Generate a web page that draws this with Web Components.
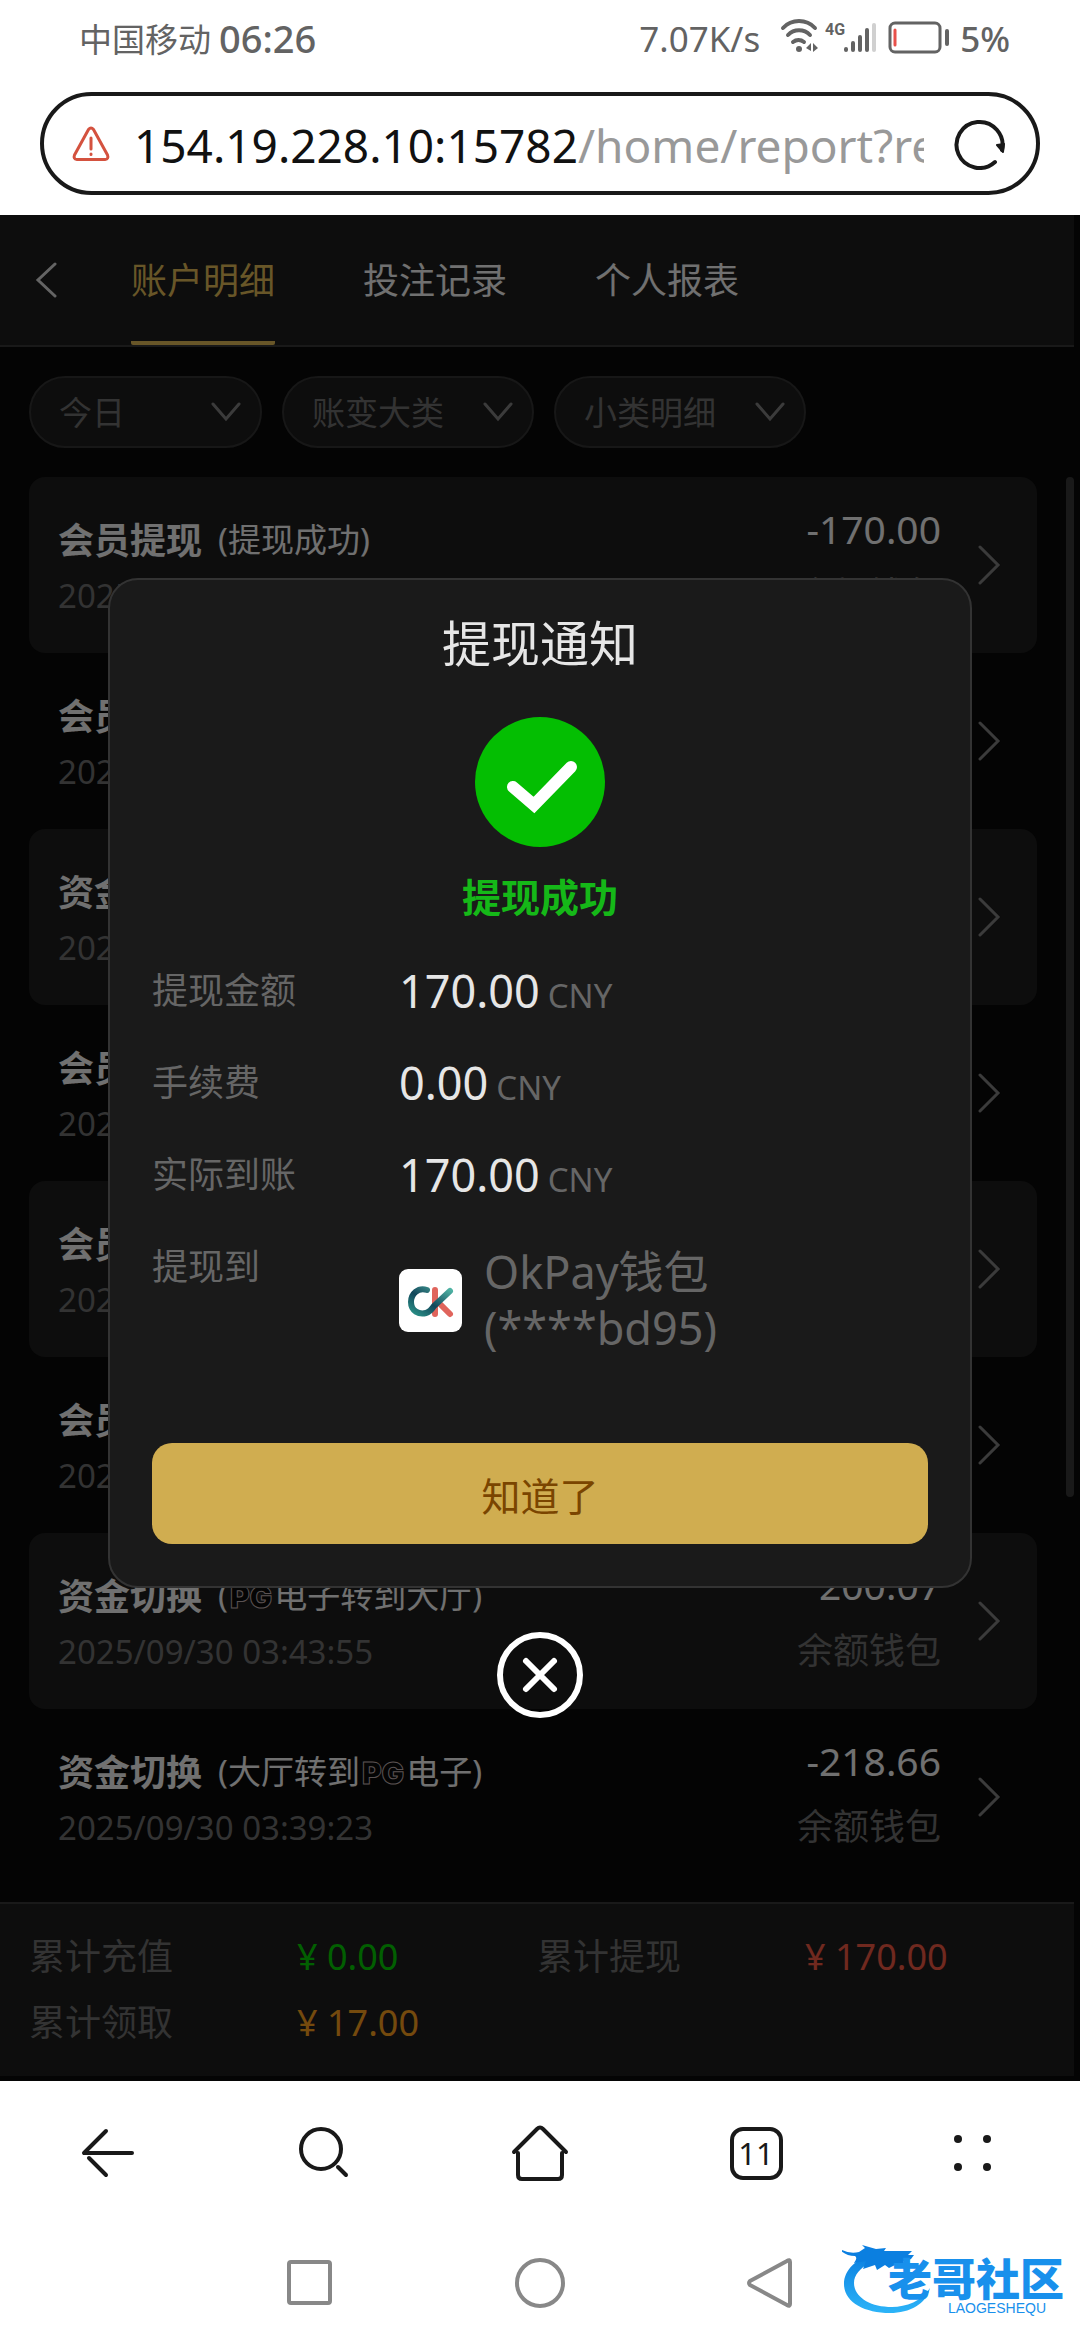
<!DOCTYPE html>
<html lang="zh-CN">
<head>
<meta charset="utf-8">
<meta name="viewport" content="width=device-width, initial-scale=1">
<title>账户明细</title>
<style>
    body {
        margin: 0;
        background: #fff;
        font-family: "Noto Sans", "Noto Sans CJK SC", sans-serif;
    }
</style>
</head>
<body>
<phone-screen>
    <status-bar slot="top"></status-bar>
    <address-bar slot="top" host="154.19.228.10:15782" path="/home/report?record=1"></address-bar>

    <report-header></report-header>
    <filter-bar></filter-bar>
    <record-list>
        <record-row name="会员提现" date="2025/09/30" amount="-170.00" wallet="余额钱包">(提现成功)</record-row>
        <record-row name="会员提现" date="2025/09/30"></record-row>
        <record-row name="资金切换" date="2025/09/30"></record-row>
        <record-row name="会员提现" date="2025/09/30"></record-row>
        <record-row name="会员提现" date="2025/09/30"></record-row>
        <record-row name="会员提现" date="2025/09/30"></record-row>
        <record-row name="资金切换" date="2025/09/30 03:43:55" amount="200.07" wallet="余额钱包">(<pg-mark></pg-mark>电子转到大厅)</record-row>
        <record-row name="资金切换" date="2025/09/30 03:39:23" amount="-218.66" wallet="余额钱包">(大厅转到<pg-mark></pg-mark>电子)</record-row>
    </record-list>
    <total-bar></total-bar>

    <notice-dialog slot="overlay" name="提现通知" status="提现成功">
        <notice-row label="提现金额" unit="CNY">170.00</notice-row>
        <notice-row label="手续费" unit="CNY">0.00</notice-row>
        <notice-row label="实际到账" unit="CNY">170.00</notice-row>
        <notice-row label="提现到"><pay-wallet name="OkPay钱包" account="(****bd95)"></pay-wallet></notice-row>
    </notice-dialog>

    <browser-nav slot="bottom" tabs="11"></browser-nav>
    <system-nav slot="bottom"></system-nav>
    <site-mark slot="bottom"></site-mark>
</phone-screen>

<script>
function define(name, html, setup) {
    const template = document.createElement('template');
    template.innerHTML = html;

    customElements.define(name, class extends HTMLElement {
        constructor() {
            super();
            this.attachShadow({ mode: 'open' });
            this.shadowRoot.appendChild(template.content.cloneNode(true));
            if (setup) setup(this, this.shadowRoot);
        }
    });
}

// copies attributes of the host into the shadow nodes marked with data-text
function fill(host, root) {
    root.querySelectorAll('[data-text]').forEach(node => {
        node.textContent = host.getAttribute(node.dataset.text) || '';
    });
}

define('phone-screen', `
<style>
    :host { display: flex; flex-direction: column; min-height: 100vh; position: relative; }
    main {
        flex: 1;
        display: flex;
        flex-direction: column;
        position: relative;
        background: #080808;
    }
    .overlay {
        position: absolute;
        inset: 0;
        display: flex;
        flex-direction: column;
        justify-content: center;
        align-items: center;
        background: rgba(0, 0, 0, .5);
    }
</style>
<slot name="top"></slot>
<main>
    <slot></slot>
    <div class="overlay"><slot name="overlay"></slot></div>
</main>
<slot name="bottom"></slot>
`);

define('status-bar', `
<style>
    :host {
        display: flex;
        align-items: center;
        height: 76px;
        padding: 0 70px 0 79px;
        color: #636363;
    }
    .carrier { font-size: 33px; }
    .time { margin-left: 8px; font-weight: 500; font-size: 38px; }
    .speed { margin-left: auto; margin-right: 20px; font-size: 35px; }
    .percent { font-weight: 500; font-size: 35px; }
</style>
<span class="carrier">中国移动</span>
<span class="time">06:26</span>
<span class="speed">7.07K/s</span>
<svg width="180" height="40" viewBox="0 0 180 40" fill="none" stroke="#636363" stroke-width="4" stroke-linecap="round">
    <path d="M3 10a22 22 0 0 1 32 0M8 17a15 15 0 0 1 22 0M13 24a9 9 0 0 1 11 0"/>
    <circle cx="19" cy="31" r="3" fill="#636363" stroke="none"/>
    <path d="M26 30l5-5v8zM38 30l-5-5v9z" fill="#636363" stroke="none"/>
    <text x="45" y="17" font-size="16" font-weight="700" fill="#636363" stroke="none" font-family="Roboto, sans-serif">4G</text>
    <path d="M66 31v1M73 25v7M80 19v13M87 12v20"/>
    <path d="M94 7v25" stroke="#d0d0d0"/>
    <rect x="110" y="5" width="50" height="29" rx="5" stroke-width="3"/>
    <path d="M115 12v15" stroke="#e8504a" stroke-width="3"/>
    <path d="M167 13v13" stroke-width="4"/>
</svg>
<span class="percent">5%</span>
`);

define('address-bar', `
<style>
    :host { display: block; padding: 16px 40px 20px; }
    form {
        display: flex;
        align-items: center;
        box-sizing: border-box;
        height: 103px;
        padding: 0 30px 0 28px;
        border: 4px solid #191919;
        border-radius: 52px;
    }
    button { padding: 0; border: 0; background: none; font: inherit; }
    .url {
        flex: 1;
        min-width: 0;
        margin: 2px 30px 0 24px;
        overflow: hidden;
        font-size: 46px;
        line-height: 64px;
        text-align: left;
        white-space: nowrap;
        color: #999;
    }
    .host { color: #111; }
    svg { display: block; }
</style>
<form>
    <svg width="38" height="36" viewBox="0 0 38 36" fill="none" stroke="#d4523f" stroke-width="3" stroke-linecap="round" stroke-linejoin="round">
        <path d="M16.500 3.500L2.500 29q-1.500 4 2.500 4.500h28q4-.5 2.500-4.500L21.500 3.500q-2.500-3-5 0zM19 12v11M19 28v.5"/>
    </svg>
    <button type="button" class="url"><span class="host" data-text="host"></span><span data-text="path"></span></button>
    <button type="button" aria-label="刷新">
        <svg width="52" height="52" viewBox="0 0 52 52" fill="none" stroke="#191919" stroke-width="4" stroke-linecap="round">
            <path d="M41 44A23 23 0 1 1 48 32"/>
            <path d="M43 27l6 7 1-8z" fill="#191919" stroke-width="2" stroke-linejoin="round"/>
        </svg>
    </button>
</form>
`, fill);

define('report-header', `
<style>
    :host {
        display: flex;
        align-items: center;
        gap: 74px;
        height: 130px;
        margin-right: 6px;
        padding-left: 35px;
        background: #1a1a1a;
        border-bottom: 2px solid #333;
    }
    button { display: block; padding: 0; border: 0; background: none; }
    svg { display: block; }
    nav { display: flex; align-self: stretch; gap: 88px; }
    a {
        box-sizing: border-box;
        height: 130px;
        border-bottom: 4px solid transparent;
        border-radius: 2px;
        color: #e0e0e0;
        font-size: 36px;
        line-height: 132px;
        text-decoration: none;
    }
    .active { color: #d0ad50; border-color: #d0ad50; }
</style>
<button aria-label="返回">
    <svg width="22" height="36" viewBox="0 0 22 36" fill="none" stroke="#c8c8c8" stroke-width="3" stroke-linecap="round"><path d="M20 2L3 18l17 16"/></svg>
</button>
<nav>
    <a class="active" href="#detail">账户明细</a>
    <a href="#bets">投注记录</a>
    <a href="#personal">个人报表</a>
</nav>
`);

define('filter-bar', `
<style>
    :host { display: flex; gap: 20px; padding: 29px 29px 0; }
    label { display: grid; align-items: center; width: 252px; }
    label:first-of-type { width: 233px; }
    select, svg { grid-area: 1 / 1; }
    select {
        appearance: none;
        box-sizing: border-box;
        width: 100%;
        height: 72px;
        padding: 0 28px;
        border: 2px solid #2e2e2e;
        border-radius: 36px;
        background: #1a1a1a;
        color: #666;
        font: inherit;
        font-size: 33px;
    }
    svg { justify-self: end; margin-right: 20px; pointer-events: none; }
</style>
<label><select aria-label="日期"><option>今日</option></select><svg width="32" height="20" viewBox="0 0 32 20" fill="none" stroke="#777" stroke-width="3" stroke-linecap="round"><path d="M3 2l13 15L29 2"/></svg></label>
<label><select aria-label="大类"><option>账变大类</option></select><svg width="32" height="20" viewBox="0 0 32 20" fill="none" stroke="#777" stroke-width="3" stroke-linecap="round"><path d="M3 2l13 15L29 2"/></svg></label>
<label><select aria-label="小类"><option>小类明细</option></select><svg width="32" height="20" viewBox="0 0 32 20" fill="none" stroke="#777" stroke-width="3" stroke-linecap="round"><path d="M3 2l13 15L29 2"/></svg></label>
`);

define('record-list', `
<style>
    :host { display: flex; flex: 1; justify-content: space-between; padding: 29px 6px 0 29px; }
    .rows { flex: 1; }
    .thumb { width: 8px; height: 1020px; margin-left: 29px; border-radius: 4px; background: #333; }
    ::slotted(record-row:nth-child(odd)) { background: #1a1a1a; }
</style>
<div class="rows"><slot></slot></div>
<div class="thumb"></div>
`);

define('record-row', `
<style>
    :host {
        display: flex;
        align-items: center;
        box-sizing: border-box;
        height: 176px;
        padding: 0 36px 0 29px;
        border-radius: 16px;
        color: #e0e0e0;
    }
    .info { flex: 1; padding-top: 4px; }
    .title { display: flex; align-items: center; gap: 16px; height: 56px; margin-bottom: 2px; font-size: 33px; }
    b { font-size: 36px; }
    .side { margin-right: 36px; padding-bottom: 6px; text-align: right; }
    .date, .wallet, .amount { line-height: 56px; }
    .date, .wallet { color: #666; }
    .date { font-size: 33px; }
    .wallet { margin-top: 10px; font-size: 36px; }
    .amount { font-size: 39px; }
</style>
<div class="info">
    <div class="title"><b data-text="name"></b><span><slot></slot></span></div>
    <div class="date" data-text="date"></div>
</div>
<div class="side">
    <div class="amount" data-text="amount"></div>
    <div class="wallet" data-text="wallet"></div>
</div>
<svg width="24" height="40" viewBox="0 0 24 40" fill="none" stroke="#777" stroke-width="3" stroke-linecap="round"><path d="M3 2l18 18L3 38"/></svg>
`, fill);

define('pg-mark', `
<style>
    :host {
        display: inline-flex;
        margin: 0 2px;
        color: #080808;
        font: 900 30px/36px Inter, sans-serif;
        -webkit-text-stroke: 1px #b4a4a4;
    }
</style>
<span>PG</span>
`);

define('total-bar', `
<style>
    :host {
        display: block;
        margin: 0 6px 5px 0;
        padding: 20px 29px;
        background: #1a1a1a;
        border-top: 2px solid #333;
    }
    dl { display: grid; grid-template-columns: 1fr 1fr; margin: 0; font-size: 36px; line-height: 66px; }
    div { display: flex; }
    dt { width: 268px; color: #666; }
    dd { margin: 0; }
    .in { color: #04be02; }
    .out { color: #e0533f; }
    .bonus { color: #e8941a; }
</style>
<dl>
    <div><dt>累计充值</dt><dd class="in">¥ 0.00</dd></div>
    <div><dt>累计提现</dt><dd class="out">¥ 170.00</dd></div>
    <div><dt>累计领取</dt><dd class="bonus">¥ 17.00</dd></div>
</dl>
`);

define('notice-dialog', `
<style>
    :host { display: flex; flex-direction: column; align-items: center; gap: 44px; width: 80%; }
    section {
        box-sizing: border-box;
        width: 100%;
        padding: 30px 42px 42px;
        border: 2px solid #333;
        border-radius: 30px;
        background: #1a1a1a;
        text-align: center;
    }
    h2 { margin: 0 0 41px; color: #e6e6e6; font-size: 49px; font-weight: 400; line-height: 66px; }
    svg { display: block; margin: 0 auto; }
    p { margin: 25px 0 23px; color: #15b818; font-size: 39px; font-weight: 700; line-height: 50px; }
    button { display: block; padding: 0; border: 0; font: inherit; }
    .ok {
        width: 100%;
        height: 101px;
        margin-top: 87px;
        border-radius: 20px;
        background: #d0ad50;
        color: #7a4500;
        font-size: 39px;
    }
    .close { background: none; }
</style>
<section role="dialog">
    <h2 data-text="name"></h2>
    <svg width="130" height="130" viewBox="0 0 130 130">
        <circle cx="65" cy="65" r="65" fill="#04be02"/>
        <path d="M38 70l21 18 37-38" fill="none" stroke="#fff" stroke-width="12" stroke-linecap="round"/>
    </svg>
    <p data-text="status"></p>
    <slot></slot>
    <button class="ok">知道了</button>
</section>
<button class="close" aria-label="关闭">
    <svg width="86" height="86" viewBox="0 0 86 86" fill="none" stroke="#fff" stroke-width="6" stroke-linecap="round">
        <circle cx="43" cy="43" r="40"/>
        <path d="M29 29l28 28M57 29L29 57"/>
    </svg>
</button>
`, fill);

define('notice-row', `
<style>
    :host { display: flex; align-items: flex-start; min-height: 92px; text-align: left; }
    .label { width: 247px; color: #666; font-size: 36px; line-height: 92px; }
    .value { color: #e6e6e6; font-size: 45px; line-height: 92px; }
    .unit { margin-left: 8px; color: #666; font-size: 33px; line-height: 1; }
    .unit:empty { display: none; }
</style>
<span class="label" data-text="label"></span>
<div class="value"><slot></slot><span class="unit" data-text="unit"></span></div>
`, fill);

define('pay-wallet', `
<style>
    :host { display: flex; align-items: center; gap: 22px; padding-top: 23px; color: #666; line-height: 56px; }
    span { display: block; }
</style>
<svg width="63" height="63" viewBox="0 0 63 63" fill="none" stroke-width="6" stroke-linecap="round">
    <defs>
        <linearGradient id="teal" x1="0" y1="1" x2="1" y2="0">
            <stop offset="0" stop-color="#2a9187"/>
            <stop offset=".45" stop-color="#12465a"/>
            <stop offset="1" stop-color="#4fb3a4"/>
        </linearGradient>
    </defs>
    <rect width="63" height="63" rx="9" fill="#fff"/>
    <path d="M36 21v24M38 32l13 13" stroke="#e0645c"/>
    <path d="M28 21c-9-3-16 4-16 12 0 9 8 13 15 11 4-1 6-4 8-7l16-15" stroke="url(#teal)"/>
</svg>
<div><span data-text="name"></span><span data-text="account"></span></div>
`, fill);

define('browser-nav', `
<style>
    :host { display: grid; grid-template-columns: repeat(5, 1fr); height: 144px; }
    button { display: grid; place-items: center; padding: 0; border: 0; background: none; color: #191919; font: inherit; }
    svg { display: block; fill: none; stroke: #191919; stroke-width: 4; stroke-linecap: round; stroke-linejoin: round; }
    .count {
        display: block;
        box-sizing: border-box;
        width: 53px;
        height: 53px;
        border: 4px solid #191919;
        border-radius: 13px;
        font-size: 31px;
        line-height: 44px;
    }
</style>
<button aria-label="后退"><svg width="54" height="54" viewBox="0 0 54 54"><path d="M25 5L3 27h48M8 32l17 17"/></svg></button>
<button aria-label="搜索"><svg width="54" height="54" viewBox="0 0 54 54"><circle cx="24" cy="23" r="20"/><path d="M41 41l8 8"/></svg></button>
<button aria-label="主页"><svg width="58" height="56" viewBox="0 0 58 56"><path d="M3 27L26 4q3-3 6 0l23 23M7 28v22q0 4 4 4h36q4 0 4-4V28"/></svg></button>
<button aria-label="标签页"><span class="count" data-text="tabs"></span></button>
<button aria-label="菜单"><svg width="46" height="46" viewBox="0 0 46 46"><g fill="#191919" stroke="none"><circle cx="9" cy="9" r="4"/><circle cx="38" cy="9" r="4"/><circle cx="9" cy="37" r="4"/><circle cx="38" cy="37" r="4"/></g></svg></button>
`, fill);

define('system-nav', `
<style>
    :host { display: flex; justify-content: center; align-items: center; gap: 180px; height: 115px; }
    button { display: block; padding: 0; border: 0; background: none; }
    svg { display: block; fill: none; stroke: #888; stroke-width: 4; stroke-linejoin: round; }
</style>
<button aria-label="最近"><svg width="50" height="50" viewBox="0 0 50 50"><rect x="4" y="4" width="41" height="41" rx="2"/></svg></button>
<button aria-label="桌面"><svg width="50" height="50" viewBox="0 0 50 50"><circle cx="25" cy="25" r="23"/></svg></button>
<button aria-label="返回"><svg width="50" height="50" viewBox="0 0 50 50"><path d="M45 4v42q0 3-3 1L5 27q-2-2 0-4L42 3q3-2 3 1z"/></svg></button>
`);

// watermark lying over the corner of the screen
define('site-mark', `
<style>
    :host {
        position: absolute;
        right: 16px;
        bottom: 24px;
        display: grid;
        width: 222px;
        height: 72px;
        color: #1890ec;
    }
    svg, div { grid-area: 1 / 1; }
    div { display: flex; flex-direction: column; align-items: flex-end; justify-content: flex-end; }
    strong { font-size: 44px; font-weight: 900; line-height: 42px; }
    small { margin-right: 18px; font: 14px/16px "Liberation Sans", sans-serif; }
</style>
<svg width="222" height="72" viewBox="0 0 222 72">
    <defs>
        <linearGradient id="wave" x1="0" y1="0" x2="0" y2="1">
            <stop offset="0" stop-color="#0b7fe0"/>
            <stop offset="1" stop-color="#2cb4f8"/>
        </linearGradient>
    </defs>
    <path fill="url(#wave)" d="M34 10C14 14 2 26 2 40c0 18 20 29 46 29 20 0 36-9 40-25-8 13-24 19-38 19-22 0-38-10-38-24 0-8 6-15 16-20z"/>
    <path fill="#0b7fe0" d="M0 6q8 4 17 2l6-4-3-3 14 4 10-1-2 3h14l14 0-4 4h6l-3 4-8 3 6 1-2 3-12-1-6 3-4-3-8 5-2-5-12 4 3-8-12 2q4-5 1-7-9 0-15-6z"/>
</svg>
<div><strong>老哥社区</strong><small>LAOGESHEQU</small></div>
`);
</script>
</body>
</html>
